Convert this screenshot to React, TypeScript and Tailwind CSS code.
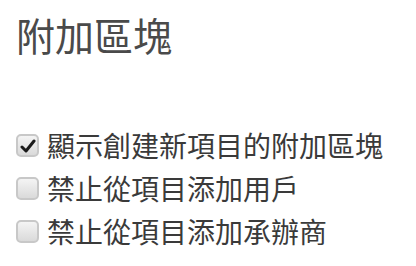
import React from 'react';

const items = [
  { label: '顯示創建新項目的附加區塊', checked: true },
  { label: '禁止從項目添加用戶', checked: false },
  { label: '禁止從項目添加承辦商', checked: false },
];

function Box({ checked }: { checked: boolean }) {
  return (
    <span className="flex h-[23px] w-[23px] shrink-0 items-center justify-center rounded-[5px] border-2 border-[#c8c8c8] bg-gradient-to-b from-[#f4f4f4] to-[#dadada]">
      {checked && (
        <svg width="16" height="14" viewBox="0 0 16 14">
          <path d="M2 8 L6 12 L14 2" fill="none" stroke="#1a1a1a" strokeWidth="3" strokeLinecap="round" strokeLinejoin="round" />
        </svg>
      )}
    </span>
  );
}

export default function App() {
  return (
    <div
      className="h-[266px] w-[416px] bg-white pl-[16px] pt-[11px] text-[#444]"
      style={{ fontFamily: '"Noto Sans CJK TC", "Noto Sans", sans-serif' }}
    >
      <h1 className="text-[39px] leading-[46px] font-normal text-[#4a4a4a]">附加區塊</h1>
      <div className="mt-[71px] flex flex-col gap-[8px]">
        {items.map((it) => (
          <label key={it.label} className="flex h-[35px] items-center gap-[8px]">
            <Box checked={it.checked} />
            <span className="text-[28px] leading-[35px] text-[#3a3a3a]">{it.label}</span>
          </label>
        ))}
      </div>
    </div>
  );
}
